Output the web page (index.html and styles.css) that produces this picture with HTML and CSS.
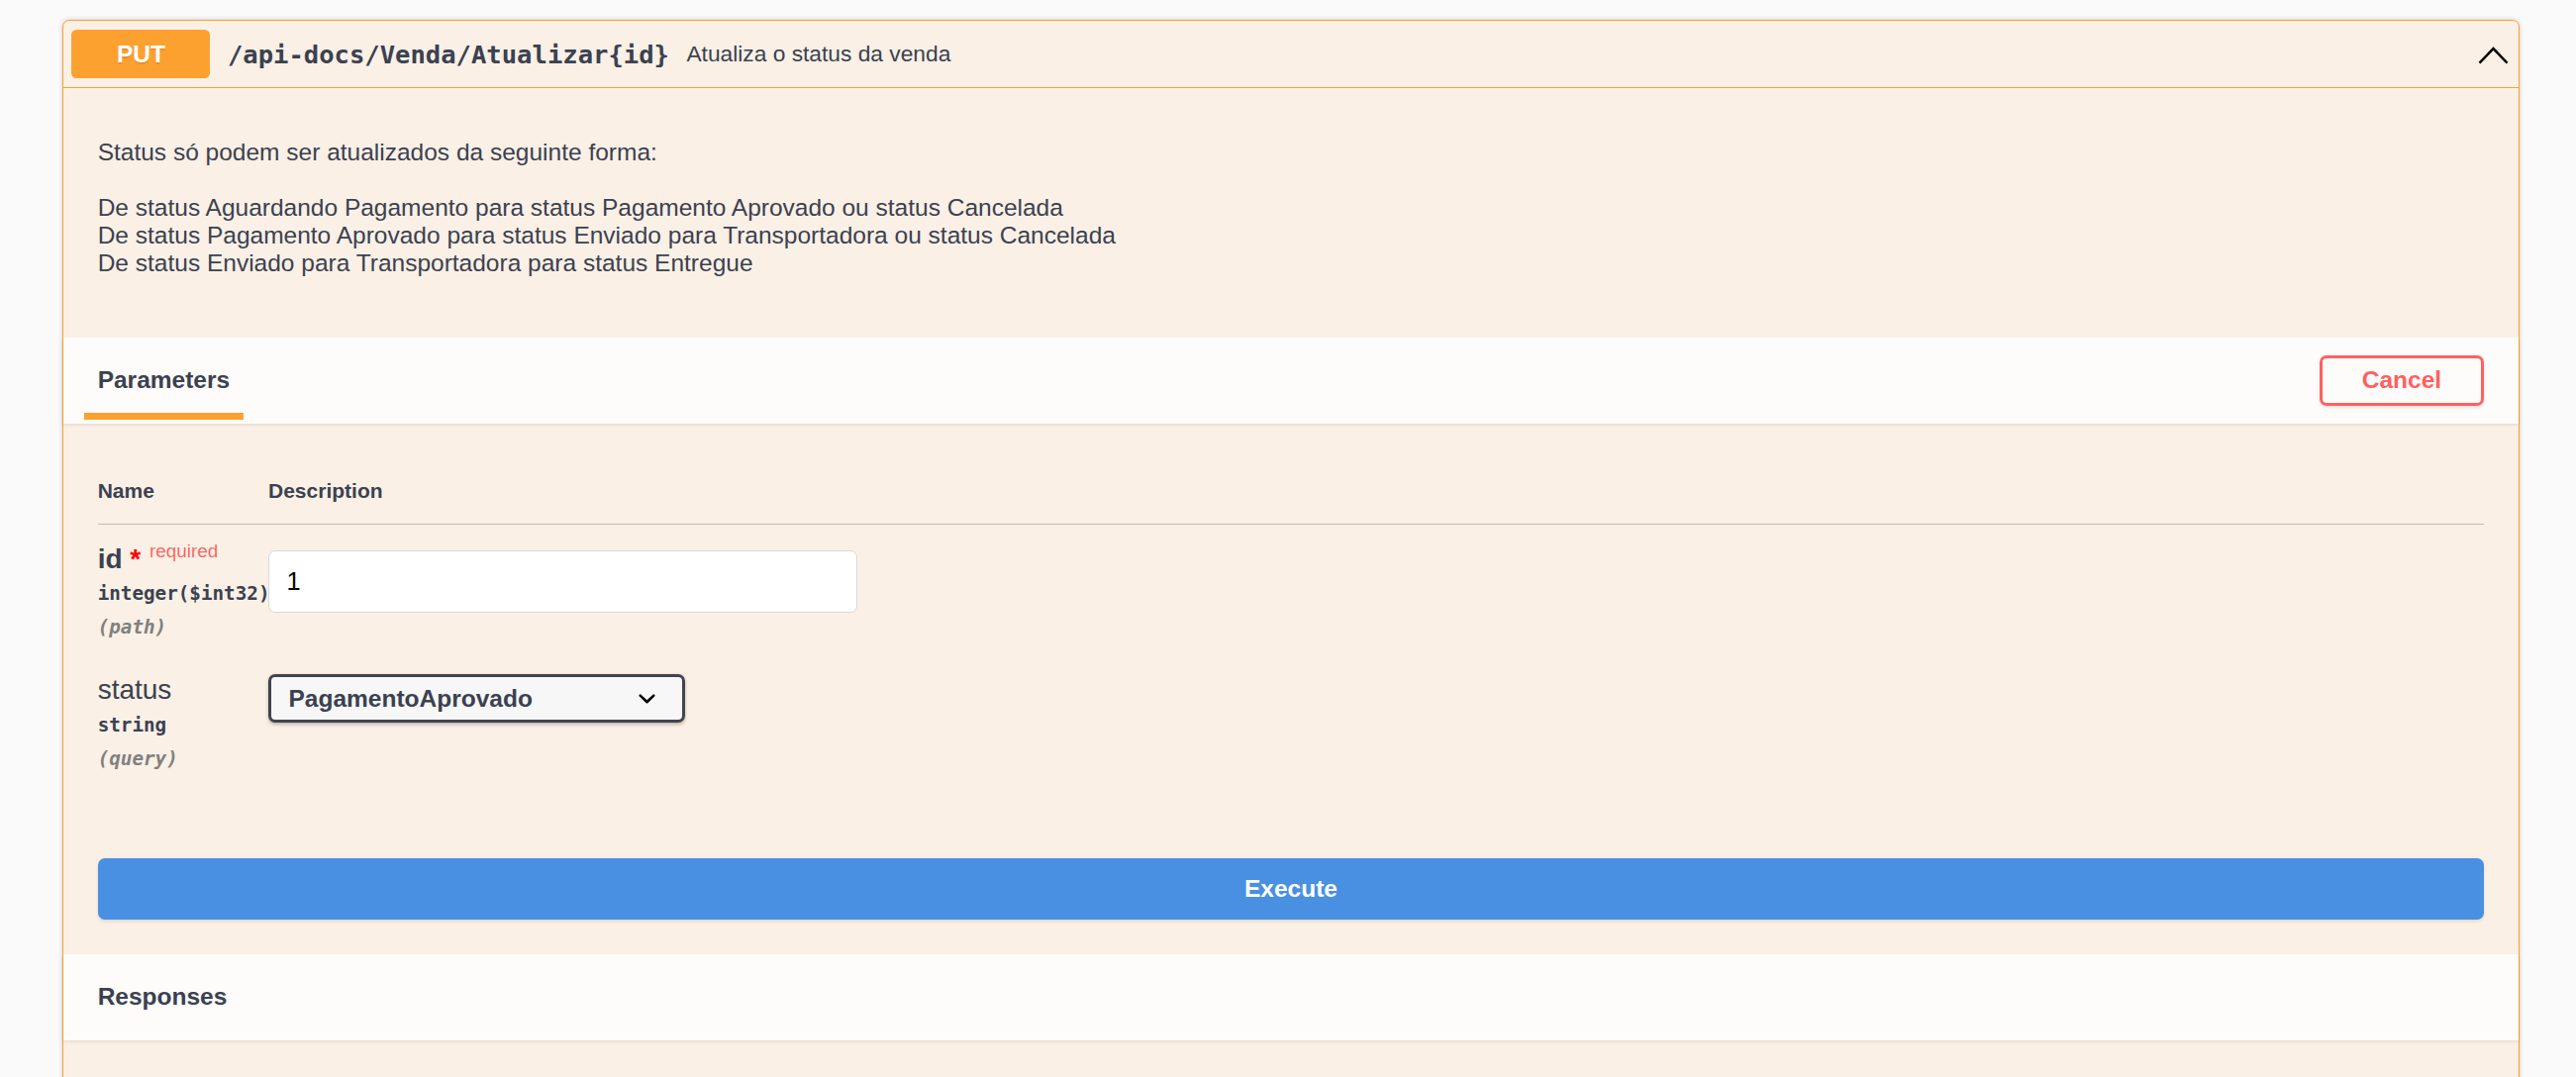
FILE: index.html
```html
<!DOCTYPE html>
<html lang="pt-BR">
<head>
<meta charset="utf-8">
<title>PUT /api-docs/Venda/Atualizar{id}</title>
<link rel="stylesheet" href="styles.css">
</head>
<body>
<div class="page">
  <div class="opblock">
    <div class="summary">
      <span class="method">PUT</span>
      <span class="path">/api-docs/Venda/Atualizar{id}</span>
      <span class="summary-desc">Atualiza o status da venda</span>
      <svg class="arrow" viewBox="0 0 20 20" width="20" height="20"><polyline points="2,15.2 10,6.9 18,15.2"/></svg>
    </div>

    <div class="description">
      <p>Status só podem ser atualizados da seguinte forma:</p>
      <p>De status Aguardando Pagamento para status Pagamento Aprovado ou status Cancelada<br>De status Pagamento Aprovado para status Enviado para Transportadora ou status Cancelada<br>De status Enviado para Transportadora para status Entregue</p>
    </div>

    <div class="section-header">
      <div class="tab-header"><h4 class="tab-title"><span>Parameters</span></h4></div>
      <button class="btn btn-cancel" type="button">Cancel</button>
    </div>

    <div class="table-container">
      <table class="parameters">
        <thead>
          <tr><th class="col-name">Name</th><th class="col-desc">Description</th></tr>
        </thead>
        <tbody>
          <tr>
            <td class="col-name">
              <div class="param-name required">id<span class="star">&nbsp;*</span><span class="req">required</span></div>
              <div class="param-type">integer($int32)</div>
              <div class="param-in">(path)</div>
            </td>
            <td class="col-desc"><input class="param-input" type="text" value="1"></td>
          </tr>
          <tr>
            <td class="col-name">
              <div class="param-name">status</div>
              <div class="param-type">string</div>
              <div class="param-in">(query)</div>
            </td>
            <td class="col-desc">
              <div class="select">
                <span class="select-text">PagamentoAprovado</span>
                <svg class="select-arrow" viewBox="0 0 20 20" width="20" height="20"><path d="M13.418 7.859a.695.695 0 0 1 .978 0 .68.68 0 0 1 0 .969l-3.908 3.83a.697.697 0 0 1-.979 0l-3.908-3.830a.68.68 0 0 1 0-.969.695.695 0 0 1 .978 0L10 11l3.418-3.141z"/></svg>
              </div>
            </td>
          </tr>
        </tbody>
      </table>
    </div>

    <div class="execute-wrapper">
      <button class="btn btn-execute" type="button">Execute</button>
    </div>

    <div class="section-header">
      <h4 class="section-title">Responses</h4>
    </div>
    <div class="responses-inner"></div>
  </div>
</div>
</body>
</html>
```

FILE: styles.css
```css
* {
  box-sizing: border-box;
}

html,
body {
  margin: 0;
  padding: 0;
  overflow: hidden;
}

body {
  background: #fafafa;
  color: #3b4151;
  font-family: "Liberation Sans", Arial, sans-serif;
}

.page {
  zoom: 1.75;
  padding: 11.6px 0 0 35.8px;
}

.opblock {
  width: 1418.7px;
  background: rgba(252, 161, 48, 0.1);
  border: 1px solid #fca130;
  border-radius: 4px;
  box-shadow: 0 0 3px rgba(0, 0, 0, 0.19);
}

/* summary bar */
.summary {
  display: flex;
  align-items: center;
  padding: 5px;
  border-bottom: 1px solid #fca130;
}

.method {
  min-width: 80px;
  padding: 6px 0;
  background: #fca130;
  border-radius: 3px;
  color: #fff;
  font-size: 14px;
  font-weight: 700;
  text-align: center;
  text-shadow: 0 1px 0 rgba(0, 0, 0, 0.1);
}

.path {
  padding: 0 10px;
  color: #3b4151;
  font-family: "DejaVu Sans Mono", monospace;
  font-size: 14.6px;
  font-weight: 700;
}

.summary-desc {
  flex: 1 1 auto;
  color: #3b4151;
  font-size: 13px;
}

.arrow {
  flex: none;
  fill: none;
  stroke: #000;
  stroke-width: 1.4;
}

/* description */
.description {
  margin: 0 0 5px;
  padding: 15px 20px;
  font-size: 12px;
  color: #3b4151;
}

.description p {
  margin: 14px 0 14.4px;
  font-size: 14px;
}

.description p + p {
  margin-top: 16.5px;
}

/* section header */
.section-header {
  display: flex;
  align-items: center;
  min-height: 50px;
  padding: 8px 20px;
  background: rgba(255, 255, 255, 0.8);
  box-shadow: 0 1px 2px rgba(0, 0, 0, 0.1);
}

.tab-header {
  flex: 1;
}

.tab-title,
.section-title {
  margin: 0;
  color: #3b4151;
  font-size: 14px;
  font-weight: 700;
}

.tab-title span {
  position: relative;
}

.tab-title span::after {
  content: "";
  position: absolute;
  left: 50%;
  bottom: -15px;
  width: 120%;
  height: 4px;
  transform: translateX(-50%);
  background: #fca130;
}

/* buttons */
.btn {
  background: transparent;
  border: 2px solid #808080;
  border-radius: 4px;
  box-shadow: 0 1px 2px rgba(0, 0, 0, 0.1);
  font-family: "Liberation Sans", Arial, sans-serif;
  font-size: 14px;
  font-weight: 700;
  line-height: normal;
  padding: 5px 23px;
}

.btn-cancel {
  border-color: #ff6060;
  color: #ff6060;
}

.btn-execute {
  display: block;
  width: 100%;
  padding: 8px 40px;
  background: #4990e2;
  border-color: #4990e2;
  color: #fff;
}

/* parameters table */
.table-container {
  padding: 20px;
}

.parameters {
  width: 100%;
  table-layout: fixed;
  border-collapse: separate;
  border-spacing: 0;
}

.parameters th {
  padding: 12px 0;
  border-bottom: 1px solid rgba(59, 65, 81, 0.3);
  color: #3b4151;
  font-size: 12px;
  font-weight: 700;
  text-align: left;
}

.parameters td {
  padding: 10px 0;
  vertical-align: top;
}

.parameters .col-name {
  width: 98.5px;
}

.param-name {
  color: #3b4151;
  font-size: 16px;
  line-height: 18px;
  font-weight: 400;
  white-space: nowrap;
}

.param-name.required {
  font-weight: 700;
}

.star {
  color: red;
}

.req {
  padding: 5px;
  color: rgba(255, 0, 0, 0.6);
  font-size: 10.8px;
  line-height: 10px;
  font-weight: 400;
  vertical-align: 6px;
}

.param-type {
  padding: 5px 0;
  color: #3b4151;
  font-family: "DejaVu Sans Mono", monospace;
  font-size: 11px;
  line-height: 14px;
  font-weight: 700;
  white-space: nowrap;
}

.param-in {
  color: #808080;
  font-family: "DejaVu Sans Mono", monospace;
  font-size: 11px;
  line-height: 14px;
  font-style: italic;
  font-weight: 700;
  white-space: nowrap;
}

.param-input {
  display: block;
  width: 340px;
  height: 35.6px;
  margin: 5px 0;
  padding: 8px 10px;
  background: #fff;
  border: 1px solid #d9d9d9;
  border-radius: 4px;
  color: #000;
  font-family: "Liberation Sans", Arial, sans-serif;
  font-size: 14.5px;
  line-height: 17.6px;
}

.select {
  display: flex;
  align-items: center;
  justify-content: space-between;
  width: 240.5px;
  height: 28.2px;
  padding: 0 10px;
  background: #f7f7f7;
  border: 2px solid #41444e;
  border-radius: 4px;
  box-shadow: 0 1px 2px 0 rgba(0, 0, 0, 0.25);
  color: #3b4151;
  font-size: 14px;
  font-weight: 700;
}

.select-arrow {
  flex: none;
  fill: #000;
}

/* execute + responses */
.execute-wrapper {
  padding: 20px;
}

.responses-inner {
  height: 60px;
}
```
